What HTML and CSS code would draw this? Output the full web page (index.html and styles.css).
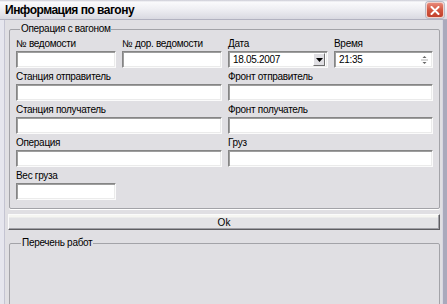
FILE: index.html
```html
<!DOCTYPE html>
<html lang="ru">
<head>
    <meta charset="UTF-8">
    <title>Информация по вагону</title>
    <link rel="stylesheet" href="styles.css">
</head>
<body>
    <div class="window">
        <div class="titlebar">
            <span class="title">Информация по вагону</span>
            <span class="close-btn">
                <svg width="10" height="9" viewBox="0 0 10 9">
                    <path d="M1.5 1 L8.5 8 M8.5 1 L1.5 8" stroke="#fff" stroke-width="2" stroke-linecap="round"/>
                </svg>
            </span>
        </div>
        <div class="client">
            <fieldset class="group">
                <legend>Операция с вагоном</legend>
                <div class="fields">
                    <div class="field">
                        <label>№ ведомости</label>
                        <input class="edit" type="text">
                    </div>
                    <div class="field">
                        <label>№ дор. ведомости</label>
                        <input class="edit" type="text">
                    </div>
                    <div class="field">
                        <label>Дата</label>
                        <div class="edit combo">
                            <span class="value">18.05.2007</span>
                            <span class="drop-btn">
                                <svg width="7" height="4" viewBox="0 0 7 4"><path d="M0 0 H7 L3.5 4 Z" fill="#000"/></svg>
                            </span>
                        </div>
                    </div>
                    <div class="field">
                        <label>Время</label>
                        <div class="edit combo">
                            <span class="value">21:35</span>
                            <span class="spin">
                                <svg width="9" height="12" viewBox="0 0 9 12">
                                    <path d="M4.5 2 L6.5 4 H2.5 Z" fill="#666"/>
                                    <path d="M1 6 H8" stroke="#b0b0b0" stroke-width="1"/>
                                    <path d="M2.5 8 H6.5 L4.5 10 Z" fill="#666"/>
                                </svg>
                            </span>
                        </div>
                    </div>

                    <div class="field wide">
                        <label>Станция отправитель</label>
                        <input class="edit" type="text">
                    </div>
                    <div class="field wide">
                        <label>Фронт отправитель</label>
                        <input class="edit" type="text">
                    </div>

                    <div class="field wide">
                        <label>Станция получатель</label>
                        <input class="edit" type="text">
                    </div>
                    <div class="field wide">
                        <label>Фронт получатель</label>
                        <input class="edit" type="text">
                    </div>

                    <div class="field wide">
                        <label>Операция</label>
                        <input class="edit" type="text">
                    </div>
                    <div class="field wide">
                        <label>Груз</label>
                        <input class="edit" type="text">
                    </div>

                    <div class="field">
                        <label>Вес груза</label>
                        <input class="edit" type="text">
                    </div>
                </div>
            </fieldset>

            <button class="ok-btn" type="button">Ok</button>

            <fieldset class="group works">
                <legend>Перечень работ</legend>
            </fieldset>
        </div>
    </div>
</body>
</html>
```

FILE: styles.css
```css
:root {
    --face: #e0dfe3;
    --text: #000;
    --group-line: #a3a3a8;
    --frame-light: #e6e6ee;
    --frame-dark: #a9a9bc;
}
* { box-sizing: border-box; }
body {
    margin: 0;
    background: var(--face);
    font-family: 'Liberation Sans', Arial, sans-serif;
    font-size: 10px;
    letter-spacing: -0.3px;
    color: var(--text);
}
.window {
    width: 447px;
    height: 304px;
    overflow: hidden;
    background: var(--face);
}
.titlebar {
    height: 20px;
    display: flex;
    align-items: center;
    justify-content: space-between;
    padding: 1px 3px 0 5px;
    background: linear-gradient(#c9c9d3 0, #fafafc 2px, #f0f0f4 45%, #d9d9e1 100%);
    border-bottom: 1px solid #b2b2c0;
}
.title {
    font-weight: 700;
    font-size: 12px;
    letter-spacing: -0.5px;
}
.close-btn {
    width: 18px;
    height: 16px;
    display: flex;
    align-items: center;
    justify-content: center;
    border: 1px solid #f3d0c8;
    border-radius: 3px;
    background: linear-gradient(#e8897a, #d2553f 50%, #c2412c);
    box-shadow: 0 0 0 1px #b9b9c6;
}
.client {
    height: 284px;
    padding: 2px 3px 0 5px;
    border-left: 4px solid var(--frame-light);
    border-right: 4px solid var(--frame-dark);
    box-shadow: inset 1px 0 0 #c4c4d2, inset -1px 0 0 #d7d7e2;
}
.group {
    margin: 0;
    padding: 1px 6px 8px 6px;
    border: 1px solid var(--group-line);
    border-radius: 2px;
    box-shadow: 0 1px 0 #fff;
}
.group legend {
    padding: 0 1px;
    margin-left: 4px;
    line-height: 14px;
}
.fields {
    display: grid;
    grid-template-columns: 100px 100px 100px 99px;
    column-gap: 6px;
    row-gap: 2px;
}
.field {
    display: flex;
    flex-direction: column;
}
.field.wide {
    grid-column: span 2;
}
.field label {
    height: 14px;
    line-height: 14px;
    white-space: nowrap;
}
.edit {
    height: 17px;
    width: 100%;
    margin: 0;
    padding: 0 3px;
    background: #fff;
    border: 1px solid;
    border-color: #858585 #fbfbfb #fbfbfb #858585;
    box-shadow: inset 1px 1px 0 #9e9e9e, inset -1px -1px 0 #ebebeb;
    font: inherit;
    outline: none;
    appearance: none;
}
.combo {
    display: flex;
    align-items: center;
    justify-content: space-between;
    padding: 0 2px 0 4px;
}
.combo .value {
    line-height: 13px;
}
.drop-btn {
    width: 12px;
    height: 13px;
    display: flex;
    align-items: center;
    justify-content: center;
    background: var(--face);
    border: 1px solid;
    border-color: #fff #6f6f6f #6f6f6f #fff;
}
.spin {
    display: flex;
    align-items: center;
    margin-right: 1px;
}
.ok-btn {
    display: block;
    width: 432px;
    height: 16px;
    margin: 5px 0 0 -1px;
    padding: 0;
    font: inherit;
    line-height: 13px;
    color: var(--text);
    background: linear-gradient(#f6f6f2 0, #f6f6f2 2px, #e3e3e6 3px);
    border: 1px solid;
    border-color: #fbfbfb #5e5e62 #5e5e62 #fbfbfb;
    box-shadow: inset -1px -1px 0 #a0a0a6;
    cursor: pointer;
}
.works {
    margin-top: 6px;
    height: 80px;
    width: 431px;
}
.works legend {
    margin-left: 5px;
}
```
